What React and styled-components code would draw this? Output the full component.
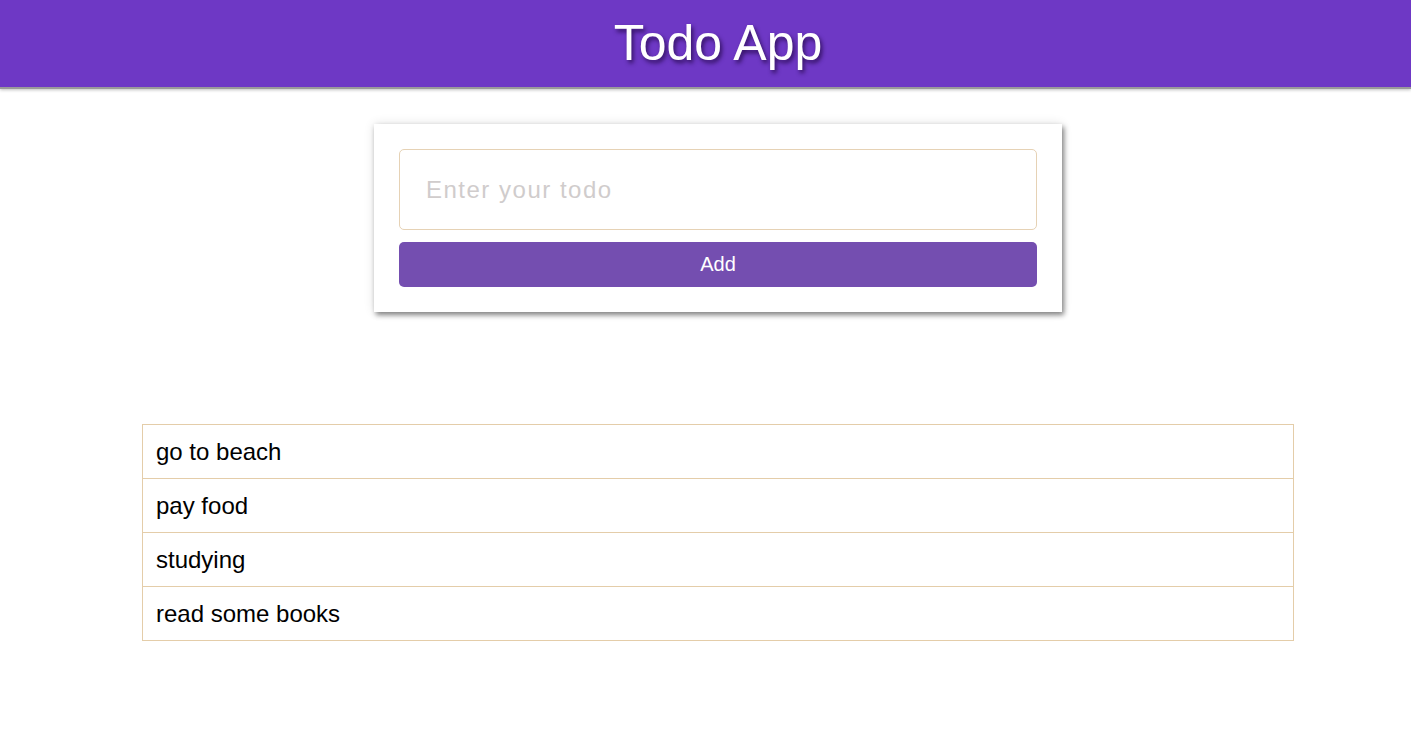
import { useState } from "react";
import styled, { createGlobalStyle } from "styled-components";

const GlobalStyle = createGlobalStyle`
    * { box-sizing: border-box; }
    body {
        margin: 0;
        background: #fff;
        font-family: "Liberation Sans", Arial, sans-serif;
    }
`;

const App = () => {
    const [todos, setTodos] = useState(["go to beach", "pay food", "studying", "read some books"]);
    const [text, setText] = useState("");

    const handleAdd = () => {
        if (!text.trim()) return;
        setTodos([...todos, text]);
        setText("");
    };

    return (
        <>
            <GlobalStyle />
            <Header>
                <Title>Todo App</Title>
            </Header>
            <Main>
                <Card>
                    <Input
                        placeholder="Enter your todo"
                        value={text}
                        onChange={(e) => setText(e.target.value)}
                    />
                    <AddButton onClick={handleAdd}>Add</AddButton>
                </Card>
                <List>
                    {todos.map((todo, i) => <Item key={i}>{todo}</Item>)}
                </List>
            </Main>
        </>
    );
};

export default App;

/* CSS */
const Header = styled.header`
    height: 89px;
    background-color: #6e38c5;
    display: flex;
    justify-content: center;
    align-items: center;
    padding-left: 25px;
    border-bottom: 2px solid #9a9a9a;
    box-shadow: 0 1px 3px rgba(0, 0, 0, 0.25);
`;

const Title = styled.h1`
    margin: 0;
    padding-bottom: 2px;
    font-size: 50px;
    font-weight: 400;
    color: #fff;
    text-shadow: 2px 3px 4px rgba(40, 10, 80, 0.85);
`;

const Main = styled.main`
    display: flex;
    flex-direction: column;
    align-items: center;
    padding: 35px 0 0 25px;
`;

const Card = styled.div`
    width: 688px;
    padding: 25px;
    display: flex;
    flex-direction: column;
    gap: 12px;
    background: #fff;
    box-shadow: 0 0 10px rgba(0, 0, 0, 0.12), 2px 3px 5px rgba(0, 0, 0, 0.45);
`;

const Input = styled.input`
    height: 81px;
    padding: 0 26px;
    border: 1px solid #e6d2b5;
    border-radius: 5px;
    font-family: inherit;
    font-size: 24px;
    letter-spacing: 1.5px;
    color: #333;
    outline: none;
    &::placeholder {
        color: #d0cccc;
    }
`;

const AddButton = styled.button`
    height: 45px;
    border: none;
    border-radius: 5px;
    background-color: #744eb0;
    color: #fff;
    font-family: inherit;
    font-size: 20px;
    cursor: pointer;
`;

const List = styled.ul`
    width: 1152px;
    margin: 112px 0 0;
    padding: 0;
    list-style: none;
    border: 1px solid #e4cda9;
    border-bottom: none;
`;

const Item = styled.li`
    height: 54px;
    padding: 0 13px;
    display: flex;
    align-items: center;
    font-size: 24px;
    color: #000;
    border-bottom: 1px solid #e4cda9;
`;
